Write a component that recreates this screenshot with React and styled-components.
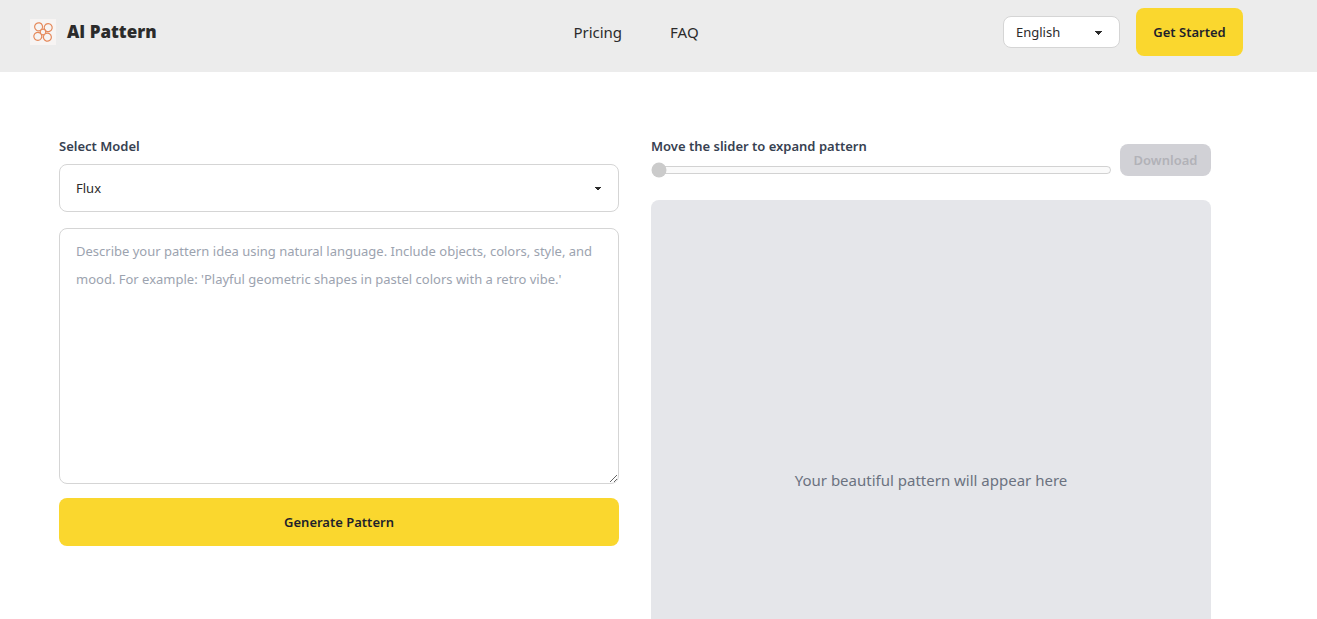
import React from "react";
import styled, { createGlobalStyle } from "styled-components";

const GlobalStyle = createGlobalStyle`
  *, *::before, *::after { box-sizing: border-box; }
  body {
    margin: 0;
    background: #ffffff;
    color: #2b2b2b;
    font-family: "Segoe UI", "Noto Sans", "Open Sans", sans-serif;
    font-size: 16px;
    line-height: 24px;
  }
  button, input, select, textarea { font: inherit; color: inherit; margin: 0; }
`;

const Shell = styled.div`
  height: 100vh;
  overflow: hidden;
`;

const Header = styled.header`
  background: #ececec;
  padding-right: 47px;
`;

const HeaderInner = styled.div`
  display: grid;
  grid-template-columns: 1fr auto 1fr;
  align-items: center;
  max-width: 1280px;
  margin: 0 auto;
  padding: 8px 27px 16px 29px;
`;

const Brand = styled.a`
  display: flex;
  align-items: center;
  justify-self: start;
  gap: 10px;
  color: #2b2b2b;
  font-family: "Segoe UI", "Open Sans", sans-serif;
  font-size: 17px;
  font-weight: 800;
  line-height: 26px;
  text-decoration: none;
`;

const Nav = styled.nav`
  display: flex;
  gap: 48px;
`;

const NavLink = styled.a`
  color: #2b2b2b;
  font-size: 15px;
  text-decoration: none;
`;

const Actions = styled.div`
  display: flex;
  align-items: center;
  justify-self: end;
  gap: 16px;
`;

const Select = styled.select`
  appearance: none;
  width: ${(p) => (p.$compact ? "117px" : "100%")};
  height: ${(p) => (p.$compact ? "32px" : "48px")};
  padding: ${(p) => (p.$compact ? "0 32px 0 12px" : "0 40px 0 16px")};
  border: 1px solid #d5d5d5;
  border-radius: 8px;
  background-color: #ffffff;
  background-image:
    linear-gradient(45deg, transparent 50%, #2b2b2b 50%),
    linear-gradient(135deg, #2b2b2b 50%, transparent 50%);
  background-position:
    calc(100% - 20px) calc(50% + 1px),
    calc(100% - 16px) calc(50% + 1px);
  background-size: 4px 4px;
  background-repeat: no-repeat;
  font-size: 13px;
`;

const Button = styled.button`
  height: ${(p) => (p.$small ? "32px" : "48px")};
  width: ${(p) => (p.$wide ? "100%" : "auto")};
  min-width: ${(p) => (p.$small ? "91px" : "107px")};
  padding: 0 12px;
  border: 0;
  border-radius: 8px;
  background: #fad72e;
  color: #1f1f2b;
  font-size: 13px;
  font-weight: 600;

  &:disabled {
    background: #d1d1d6;
    color: #b2b2b8;
  }
`;

const Main = styled.main`
  padding: 64px 47px 0 0;
`;

const Columns = styled.div`
  display: grid;
  grid-template-columns: 1fr 1fr;
  gap: 32px;
  width: calc(100% - 118px);
  max-width: 1152px;
  margin: 0 auto;
`;

const Form = styled.form`
  display: flex;
  flex-direction: column;
`;

const Label = styled.label`
  display: block;
  color: #374151;
  font-size: 13px;
  font-weight: 600;
  line-height: 20px;
`;

const Field = styled.div`
  display: flex;
  flex-direction: column;
  gap: 8px;
  margin-bottom: 16px;
`;

const Prompt = styled.textarea`
  display: block;
  width: 100%;
  height: 256px;
  margin-bottom: 14px;
  padding: 8px 16px;
  border: 1px solid #d5d5d5;
  border-radius: 8px;
  background: #ffffff;
  font-size: 13px;
  line-height: 28px;
  resize: vertical;

  &::placeholder { color: #9ca3af; }
`;

const Controls = styled.div`
  display: flex;
  align-items: center;
  gap: 8px;
  margin-bottom: 22px;
`;

const SliderField = styled.div`
  flex: 1;
`;

const Slider = styled.input`
  display: block;
  width: 100%;
  height: 16px;
  margin-top: 6px;
`;

const DownloadSlot = styled.div`
  padding-top: 6px;
`;

const Preview = styled.div`
  display: flex;
  align-items: center;
  justify-content: center;
  aspect-ratio: 1;
  border-radius: 8px;
  background: #e5e6ea;
  color: #6b7280;
  font-size: 15px;
`;

function Logo() {
  return (
    <svg width="28" height="28" viewBox="0 0 28 28" aria-hidden="true">
      <rect x="1" y="1" width="26" height="26" fill="#f7f4f3" />
      <g fill="none" stroke="#e58a5c" strokeWidth="1.2" transform="rotate(6 14 14)">
        <path d="M12.6 11.2A4 4 0 1 0 11 12.8" />
        <path d="M16.8 12.6A4 4 0 1 0 15.2 11" />
        <path d="M15.4 16.8A4 4 0 1 0 17 15.2" />
        <path d="M11.2 15.4A4 4 0 1 0 12.8 17" />
        <circle cx="14" cy="14" r="2.8" />
      </g>
    </svg>
  );
}

export default function App() {
  return (
    <Shell>
      <GlobalStyle />
      <Header>
        <HeaderInner>
          <Brand href="#">
            <Logo />
            AI Pattern
          </Brand>
          <Nav>
            <NavLink href="#pricing">Pricing</NavLink>
            <NavLink href="#faq">FAQ</NavLink>
          </Nav>
          <Actions>
            <Select $compact aria-label="Language" defaultValue="en">
              <option value="en">English</option>
            </Select>
            <Button type="button">Get Started</Button>
          </Actions>
        </HeaderInner>
      </Header>
      <Main>
        <Columns>
          <Form onSubmit={(e) => e.preventDefault()}>
            <Field>
              <Label htmlFor="model">Select Model</Label>
              <Select id="model" defaultValue="flux">
                <option value="flux">Flux</option>
              </Select>
            </Field>
            <Prompt
              aria-label="Pattern description"
              placeholder="Describe your pattern idea using natural language. Include objects, colors, style, and mood. For example: 'Playful geometric shapes in pastel colors with a retro vibe.'"
            />
            <Button type="submit" $wide>Generate Pattern</Button>
          </Form>
          <section>
            <Controls>
              <SliderField>
                <Label htmlFor="expand">Move the slider to expand pattern</Label>
                <Slider id="expand" type="range" min="1" max="10" defaultValue="1" disabled />
              </SliderField>
              <DownloadSlot>
                <Button type="button" $small disabled>Download</Button>
              </DownloadSlot>
            </Controls>
            <Preview>Your beautiful pattern will appear here</Preview>
          </section>
        </Columns>
      </Main>
    </Shell>
  );
}
